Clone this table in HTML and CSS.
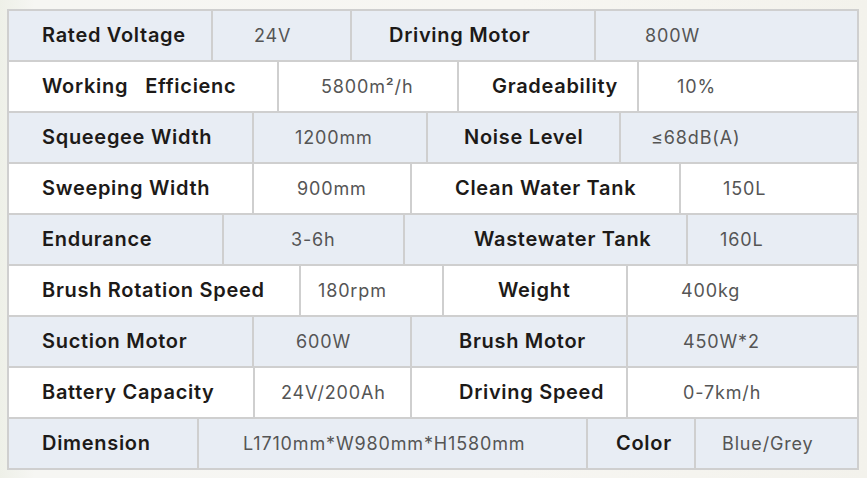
FILE: index.html
```html
<!DOCTYPE html>
<html lang="en">
<head>
<meta charset="utf-8">
<title>Specifications</title>
<link rel="stylesheet" href="styles.css">
</head>
<body>
<div class="spec">
  <div class="row r1 shade">
    <div class="cell k">Rated Voltage</div><div class="cell v">24V</div><div class="cell k">Driving Motor</div><div class="cell v">800W</div>
  </div>
  <div class="row r2">
    <div class="cell k">Working   Efficienc</div><div class="cell v">5800m²/h</div><div class="cell k">Gradeability</div><div class="cell v">10%</div>
  </div>
  <div class="row r3 shade">
    <div class="cell k">Squeegee Width</div><div class="cell v">1200mm</div><div class="cell k">Noise Level</div><div class="cell v">≤68dB(A)</div>
  </div>
  <div class="row r4">
    <div class="cell k">Sweeping Width</div><div class="cell v">900mm</div><div class="cell k">Clean Water Tank</div><div class="cell v">150L</div>
  </div>
  <div class="row r5 shade">
    <div class="cell k">Endurance</div><div class="cell v">3-6h</div><div class="cell k">Wastewater Tank</div><div class="cell v">160L</div>
  </div>
  <div class="row r6">
    <div class="cell k">Brush Rotation Speed</div><div class="cell v">180rpm</div><div class="cell k">Weight</div><div class="cell v">400kg</div>
  </div>
  <div class="row r7 shade">
    <div class="cell k">Suction Motor</div><div class="cell v">600W</div><div class="cell k">Brush Motor</div><div class="cell v">450W*2</div>
  </div>
  <div class="row r8">
    <div class="cell k">Battery Capacity</div><div class="cell v">24V/200Ah</div><div class="cell k">Driving Speed</div><div class="cell v">0-7km/h</div>
  </div>
  <div class="row r9 shade">
    <div class="cell k">Dimension</div><div class="cell v">L1710mm*W980mm*H1580mm</div><div class="cell k">Color</div><div class="cell v">Blue/Grey</div>
  </div>
</div>
</body>
</html>
```
FILE: styles.css
```css
html, body {
  margin: 0;
  padding: 0;
}
body {
  width: 867px;
  height: 478px;
  overflow: hidden;
  background: linear-gradient(90deg, #eef0e8 0%, #f6f6f3 4%, #f7f6f2 60%, #f3f2ec 100%);
  font-family: Inter, "Noto Sans", sans-serif;
  padding: 9px 0 0 7px;
  box-sizing: border-box;
}
.spec {
  width: 852px;
  border-left: 2px solid #cfcfcf;
  border-top: 2px solid #cfcfcf;
  box-sizing: border-box;
  display: flex;
  flex-direction: column;
}
.row {
  display: grid;
  height: 51px;
  background: #ffffff;
}
.row.shade {
  background: #e8edf4;
}
.cell {
  box-sizing: border-box;
  border-right: 2px solid #cfcfcf;
  border-bottom: 2px solid #cfcfcf;
  display: flex;
  align-items: center;
  white-space: pre;
  padding-bottom: 1px;
}
.k {
  font-size: 20px;
  font-weight: 600;
  color: #1d1a18;
  letter-spacing: 0.7px;
}
.v {
  font-size: 18px;
  font-weight: 400;
  color: #555555;
  letter-spacing: 0.85px;
}
.row .cell:first-child { padding-left: 33px; }

.r1 { grid-template-columns: 204px 139px 244px 263px; }
.r1 .cell:nth-child(2) { padding-left: 41px; }
.r1 .cell:nth-child(3) { padding-left: 37px; }
.r1 .cell:nth-child(4) { padding-left: 49px; }

.r2 { grid-template-columns: 270px 180px 180px 220px; }
.r2 .cell:nth-child(2) { padding-left: 42px; }
.r2 .cell:nth-child(3) { padding-left: 33px; }
.r2 .cell:nth-child(4) { padding-left: 38px; }

.r3 { grid-template-columns: 245px 174px 193px 238px; }
.r3 .cell:nth-child(2) { padding-left: 41px; }
.r3 .cell:nth-child(3) { padding-left: 36px; }
.r3 .cell:nth-child(4) { padding-left: 30px; }

.r4 { grid-template-columns: 245px 158px 269px 178px; }
.r4 .cell:nth-child(2) { padding-left: 43px; }
.r4 .cell:nth-child(3) { padding-left: 43px; }
.r4 .cell:nth-child(4) { padding-left: 42px; }

.r5 { grid-template-columns: 215px 181px 283px 171px; }
.r5 .cell:nth-child(2) { padding-left: 67px; }
.r5 .cell:nth-child(3) { padding-left: 69px; }
.r5 .cell:nth-child(4) { padding-left: 32px; }

.r6 { grid-template-columns: 292px 143px 184px 231px; }
.r6 .cell:nth-child(2) { padding-left: 17px; }
.r6 .cell:nth-child(3) { padding-left: 54px; }
.r6 .cell:nth-child(4) { padding-left: 53px; }

.r7 { grid-template-columns: 245px 158px 216px 231px; }
.r7 .cell:nth-child(2) { padding-left: 42px; }
.r7 .cell:nth-child(3) { padding-left: 47px; }
.r7 .cell:nth-child(4) { padding-left: 55px; }

.r8 { grid-template-columns: 246px 157px 216px 231px; }
.r8 .cell:nth-child(2) { padding-left: 26px; }
.r8 .cell:nth-child(3) { padding-left: 47px; }
.r8 .cell:nth-child(4) { padding-left: 55px; }

.r9 { grid-template-columns: 190px 389px 108px 163px; }
.r9 .cell:nth-child(2) { padding-left: 44px; }
.r9 .cell:nth-child(3) { padding-left: 28px; }
.r9 .cell:nth-child(4) { padding-left: 26px; }
```
